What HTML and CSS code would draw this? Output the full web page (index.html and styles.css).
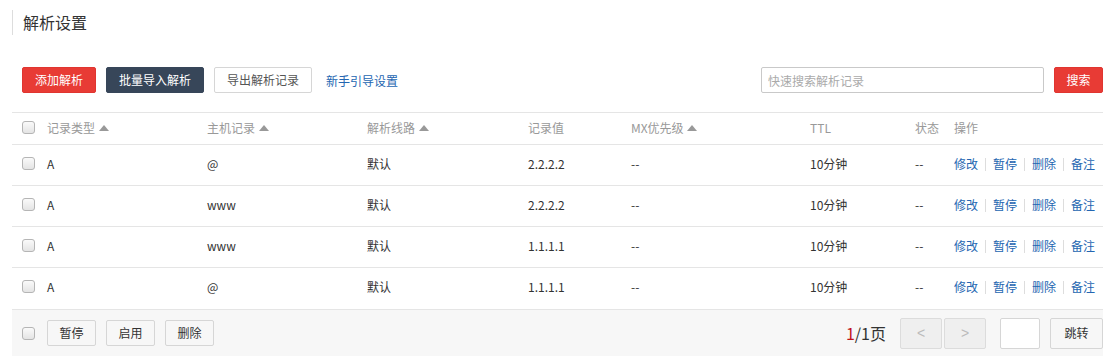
FILE: index.html
```html
<!DOCTYPE html>
<html lang="zh">
<head>
<meta charset="utf-8">
<link rel="stylesheet" href="styles.css">
</head>
<body>
<div class="page">
  <div class="title">解析设置</div>
  <div class="toolbar">
    <div class="tools-left">
      <button class="btn btn-red">添加解析</button>
      <button class="btn btn-dark">批量导入解析</button>
      <button class="btn btn-white">导出解析记录</button>
      <a class="guide">新手引导设置</a>
    </div>
    <div class="tools-right">
      <input class="search" type="text" placeholder="快速搜索解析记录">
      <button class="btn btn-red btn-search">搜索</button>
    </div>
  </div>
  <table class="grid">
    <colgroup>
      <col class="c0"><col class="c1"><col class="c2"><col class="c3"><col class="c4"><col class="c5"><col class="c6"><col class="c7"><col class="c8">
    </colgroup>
    <thead>
      <tr>
        <th><span class="cb"></span></th>
        <th>记录类型 <i class="tri"></i></th>
        <th>主机记录 <i class="tri"></i></th>
        <th>解析线路 <i class="tri"></i></th>
        <th>记录值</th>
        <th>MX优先级 <i class="tri"></i></th>
        <th>TTL</th>
        <th>状态</th>
        <th>操作</th>
      </tr>
    </thead>
    <tbody>
      <tr>
        <td><span class="cb"></span></td><td>A</td><td>@</td><td>默认</td><td>2.2.2.2</td><td>--</td><td>10分钟</td><td>--</td>
        <td class="ops"><a>修改</a><s></s><a>暂停</a><s></s><a>删除</a><s></s><a>备注</a></td>
      </tr>
      <tr>
        <td><span class="cb"></span></td><td>A</td><td>www</td><td>默认</td><td>2.2.2.2</td><td>--</td><td>10分钟</td><td>--</td>
        <td class="ops"><a>修改</a><s></s><a>暂停</a><s></s><a>删除</a><s></s><a>备注</a></td>
      </tr>
      <tr>
        <td><span class="cb"></span></td><td>A</td><td>www</td><td>默认</td><td>1.1.1.1</td><td>--</td><td>10分钟</td><td>--</td>
        <td class="ops"><a>修改</a><s></s><a>暂停</a><s></s><a>删除</a><s></s><a>备注</a></td>
      </tr>
      <tr>
        <td><span class="cb"></span></td><td>A</td><td>@</td><td>默认</td><td>1.1.1.1</td><td>--</td><td>10分钟</td><td>--</td>
        <td class="ops"><a>修改</a><s></s><a>暂停</a><s></s><a>删除</a><s></s><a>备注</a></td>
      </tr>
    </tbody>
  </table>
  <div class="footer">
    <div class="foot-left">
      <span class="cb"></span>
      <button class="btn btn-gray">暂停</button>
      <button class="btn btn-gray">启用</button>
      <button class="btn btn-gray">删除</button>
    </div>
    <div class="foot-right">
      <span class="pages"><em>1</em>/1页</span>
      <span class="pager">
        <button class="pg">&lt;</button><button class="pg">&gt;</button>
      </span>
      <input class="jump" type="text">
      <button class="btn btn-jump">跳转</button>
    </div>
  </div>
</div>
</body>
</html>
```
FILE: styles.css
```css
* { box-sizing: border-box; }
html, body { margin: 0; padding: 0; background: #fff; }
body {
  font-family: "Noto Sans CJK SC", "Liberation Sans", sans-serif;
  font-size: 12px;
  color: #333;
}
.page { padding: 10px 5px 0 12px; }
.title {
  border-left: 1px solid #ddd;
  padding-left: 10px;
  height: 25px;
  line-height: 25px;
  font-size: 16px;
  color: #333;
}
.toolbar {
  display: flex;
  justify-content: space-between;
  align-items: center;
  margin-top: 32px;
  padding-left: 10px;
  height: 26px;
}
.tools-left, .tools-right { display: flex; align-items: center; }
.btn {
  font-family: inherit;
  font-size: 12px;
  height: 26px;
  padding: 0 12px;
  border: 1px solid transparent;
  border-radius: 2px;
  margin: 0 10px 0 0;
  cursor: pointer;
  line-height: 24px;
}
.btn-red { background: #e83b35; border-color: #e03530; color: #fff; width: 74px; }
.btn-dark { background: #374659; border-color: #374659; color: #fff; width: 98px; }
.btn-white { background: #fff; border-color: #d6d6d6; color: #555; width: 98px; margin-right: 14px; }
.guide { color: #2466b1; font-size: 12px; }
.search {
  width: 283px;
  height: 26px;
  border: 1px solid #c9c9c9;
  border-radius: 2px;
  padding: 0 6px;
  font-family: inherit;
  font-size: 12px;
  margin-right: 10px;
}
.search::placeholder { color: #aaa; }
.btn-search { width: 49px; margin-right: 0; padding: 0; }
.grid {
  width: 1091px;
  margin-top: 19px;
  border-collapse: collapse;
  table-layout: fixed;
}
.c0 { width: 35px; } .c1 { width: 160px; } .c2 { width: 160px; } .c3 { width: 161px; }
.c4 { width: 103px; } .c5 { width: 179px; } .c6 { width: 105px; } .c7 { width: 39px; } .c8 { width: 149px; }
.grid th, .grid td {
  text-align: left;
  padding: 0 0 3px 0;
  border-top: 1px solid #e5e5e5;
  white-space: nowrap;
}
.grid th {
  height: 32px;
  font-weight: normal;
  color: #999;
}
.grid td { height: 41px; color: #333; padding-bottom: 4px; }
.grid th:first-child, .grid td:first-child { padding-left: 10px; }
.cb {
  display: inline-block;
  width: 13px;
  height: 13px;
  border: 1px solid #b5b5b5;
  border-radius: 3px;
  background: linear-gradient(#fafafa, #e4e4e4);
  vertical-align: -2px;
}
.grid th .cb { position: relative; top: -1px; }
.grid td .cb { position: relative; top: -1px; }
.tri {
  display: inline-block;
  width: 0; height: 0;
  border-left: 5px solid transparent;
  border-right: 5px solid transparent;
  border-bottom: 6px solid #999;
  vertical-align: 2px;
  margin-left: 1px;
}
.ops a { color: #2466b1; }
.ops s {
  display: inline-block;
  width: 1px;
  height: 13px;
  background: #ddd;
  margin: 0 7px;
  vertical-align: -2px;
}
.footer {
  display: flex;
  justify-content: space-between;
  align-items: center;
  background: #f7f7f7;
  border-top: 1px solid #e5e5e5;
  height: 48px;
  width: 1091px;
  padding-left: 10px;
}
.foot-left, .foot-right { display: flex; align-items: center; }
.foot-left .cb { margin-right: 12px; }
.btn-gray {
  background: #f7f7f7;
  border-color: #d6d6d6;
  color: #333;
  width: 49px;
  padding: 0;
  height: 26px;
}
.pages { font-size: 16px; color: #333; margin-right: 14px; }
.pages em { font-style: normal; color: #c0141d; }
.pager { display: flex; gap: 2px; margin-right: 14px; }
.pg {
  width: 42px;
  height: 31px;
  border: 1px solid #dcdcdc;
  background: #efefef;
  color: #bbb;
  font-size: 14px;
  font-family: "Liberation Sans", sans-serif;
  border-radius: 2px;
}
.jump {
  width: 40px;
  height: 31px;
  border: 1px solid #d6d6d6;
  background: #fff;
  border-radius: 2px;
  margin-right: 10px;
}
.btn-jump {
  width: 53px;
  height: 31px;
  padding: 0;
  margin: 0;
  background: #f7f7f7;
  border-color: #d6d6d6;
  color: #333;
}
```
